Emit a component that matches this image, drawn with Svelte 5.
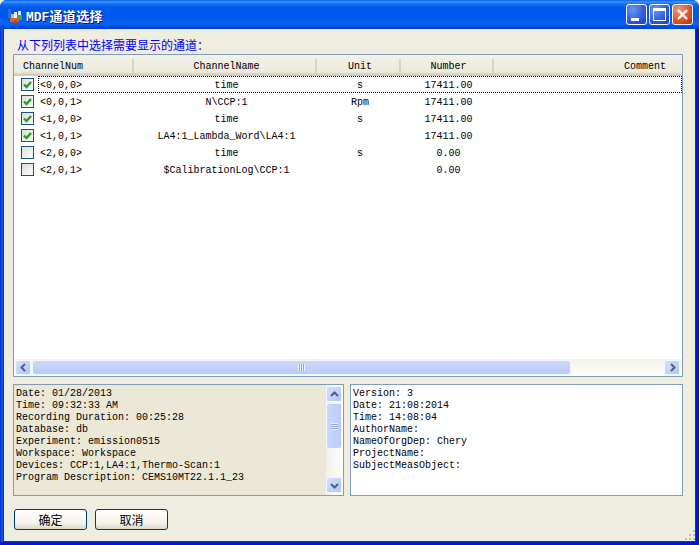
<script>
  const cols = [
    ['<0,0,0>', 'time', 's', '17411.00', true],
    ['<0,0,1>', 'N\\CCP:1', 'Rpm', '17411.00', true],
    ['<1,0,0>', 'time', 's', '17411.00', true],
    ['<1,0,1>', 'LA4:1_Lambda_Word\\LA4:1', '', '17411.00', true],
    ['<2,0,0>', 'time', 's', '0.00', false],
    ['<2,0,1>', '$CalibrationLog\\CCP:1', '', '0.00', false]
  ];
  const leftInfo = ['Date: 01/28/2013','Time: 09:32:33 AM','Recording Duration: 00:25:28','Database: db','Experiment: emission0515','Workspace: Workspace','Devices: CCP:1,LA4:1,Thermo-Scan:1','Program Description: CEMS10MT22.1.1_23'];
  const rightInfo = ['Version: 3','Date: 21:08:2014','Time: 14:08:04','AuthorName:','NameOfOrgDep: Chery','ProjectName:','SubjectMeasObject:'];
</script>

<div class="win">
  <div class="titlebar">
    <svg class="appicon" width="17" height="17" viewBox="0 0 17 17">
      <rect x="1" y="3" width="3" height="9" fill="#2f6fd8"/>
      <rect x="4" y="8" width="3" height="4" fill="#9cc0ee"/>
      <rect x="7" y="6" width="3" height="6" fill="#e6eefa"/>
      <rect x="3" y="12" width="9" height="4" fill="#d8662a"/>
      <rect x="7" y="14" width="3" height="3" fill="#c9402a"/>
      <rect x="10" y="9" width="5" height="5" fill="#4da24a"/>
      <rect x="11" y="5" width="3" height="4" fill="#dfe9f8"/>
    </svg>
    <span class="title"><b class="lat">MDF</b>通道选择</span>
    <span class="spacer"></span>
    <button class="cap blue" aria-label="minimize"><i class="min"></i></button>
    <button class="cap blue" aria-label="maximize"><i class="max"></i></button>
    <button class="cap red" aria-label="close">
      <svg width="13" height="13" viewBox="0 0 13 13"><path d="M2 2l9 9M11 2l-9 9" stroke="#fff" stroke-width="2.4"/></svg>
    </button>
  </div>
  <div class="body">
    <div class="prompt">从下列列表中选择需要显示的通道：</div>
    <div class="list">
      <div class="head row">
        <span class="c0 hc">ChannelNum</span>
        <span class="c1 hc">ChannelName</span>
        <span class="c2 hc">Unit</span>
        <span class="c3 hc">Number</span>
        <span class="c4">Comment</span>
      </div>
      <div class="rows">
        {#each cols as r, i}
          <div class="row item" class:focus={i === 0}>
            <span class="c0 first">
              <span class="cb" class:on={r[4]}>
                {#if r[4]}
                  <svg width="11" height="11" viewBox="0 0 11 11"><path d="M2 5.5l2.5 2.5L9 3" fill="none" stroke="#21a121" stroke-width="2.4"/></svg>
                {/if}
              </span>
              <span class="cell">{r[0]}</span>
            </span>
            <span class="c1 cell">{r[1]}</span>
            <span class="c2 cell">{r[2]}</span>
            <span class="c3 cell">{r[3]}</span>
            <span class="c4"></span>
          </div>
        {/each}
      </div>
      <div class="hscroll">
        <span class="sbtn"><svg width="9" height="9" viewBox="0 0 9 9"><path d="M6 1L2.5 4.5 6 8" fill="none" stroke="#4d6185" stroke-width="2"/></svg></span>
        <span class="hthumb"><span class="grip"></span></span>
        <span class="htrack"></span>
        <span class="sbtn"><svg width="9" height="9" viewBox="0 0 9 9"><path d="M3 1l3.5 3.5L3 8" fill="none" stroke="#4d6185" stroke-width="2"/></svg></span>
      </div>
    </div>
    <div class="panels">
      <div class="panel left">
        <div class="text">{#each leftInfo as l}<div>{l}</div>{/each}</div>
        <div class="vscroll">
          <span class="sbtn"><svg width="9" height="9" viewBox="0 0 9 9"><path d="M1 6l3.5-3.5L8 6" fill="none" stroke="#4d6185" stroke-width="2"/></svg></span>
          <span class="vthumb"><span class="vgrip"></span></span>
          <span class="vtrack"></span>
          <span class="sbtn"><svg width="9" height="9" viewBox="0 0 9 9"><path d="M1 3l3.5 3.5L8 3" fill="none" stroke="#4d6185" stroke-width="2"/></svg></span>
        </div>
      </div>
      <div class="panel right">
        <div class="text">{#each rightInfo as l}<div>{l}</div>{/each}</div>
      </div>
    </div>
    <div class="buttons">
      <button class="btn">确定</button>
      <button class="btn">取消</button>
    </div>
    <svg class="grip-corner" width="12" height="12" viewBox="0 0 12 12" fill="#c1bdaa">
      <rect x="10" y="1" width="2" height="2"/><rect x="6" y="5" width="2" height="2"/><rect x="10" y="5" width="2" height="2"/>
      <rect x="2" y="9" width="2" height="2"/><rect x="6" y="9" width="2" height="2"/><rect x="10" y="9" width="2" height="2"/>
    </svg>
  </div>
</div>

<style>
  :global(body) { margin: 0; background: #efece0; }
  .win {
    width: 699px; height: 545px; box-sizing: border-box;
    display: flex; flex-direction: column;
    background:
      linear-gradient(0deg, #0019cf 3px, transparent 3px),
      linear-gradient(90deg, #0831d9 0 1px, #0855dd 1px 3px, #0831d9 3px 696px, #0019cf 696px);
    border-radius: 7px 7px 0 0; overflow: hidden;
    font-family: "Liberation Mono", "Noto Sans CJK SC", monospace;
    font-size: 10px; color: #000;
  }
  .titlebar {
    height: 29px; flex: none; display: flex; align-items: center; box-sizing: border-box; padding: 0 6px 0 7px;
    background: linear-gradient(180deg, #0a5fe6 0, #3c96fb 2px, #0f6cf4 4px, #0058e8 8px, #0058ee 18px, #0a64f4 24px, #0048dd 27px, #003fc8 29px);
  }
  .appicon { flex: none; }
  .title { margin: 2px 0 0 2px; color: #fff; font: bold 13px "Noto Sans CJK SC", sans-serif; letter-spacing: 0.4px; text-shadow: 1px 1px #0f1089; }
  .lat { font: bold 13px "Liberation Mono", monospace; letter-spacing: 0; }
  .spacer { flex: 1; }
  .cap {
    width: 21px; height: 21px; margin-left: 2px; padding: 0; border: 1px solid #fff; border-radius: 3px;
    display: flex; align-items: center; justify-content: center; position: relative;
  }
  .blue { background: radial-gradient(circle at 30% 25%, #6b95f2, #2a55dc 65%, #1f3fbe); }
  .red { background: radial-gradient(circle at 30% 25%, #ea9b7c, #d84b23 65%, #b32b10); }
  .min { position: absolute; left: 4px; bottom: 3px; width: 8px; height: 3px; background: #fff; }
  .max { width: 13px; height: 13px; box-sizing: border-box; border: 1px solid #fff; border-top-width: 3px; }
  .body {
    flex: 1; min-height: 0; margin: 0 4px 4px; background: #efece0; position: relative;
    padding: 8px 9px 0; box-sizing: border-box;
    display: flex; flex-direction: column;
  }
  .prompt { height: 17px; font: 12px/16px "Noto Sans CJK SC", sans-serif; color: #0000ff; padding-left: 4px; box-sizing: border-box; }
  .list {
    width: 670px; height: 323px; box-sizing: border-box; border: 1px solid #7f9db9; background: #fff;
    display: flex; flex-direction: column;
  }
  .row { display: grid; grid-template-columns: 120px 183px 84px 93px 1fr; align-items: center; text-align: center; white-space: pre; }
  .head {
    height: 21px; flex: none; box-sizing: border-box; padding-top: 1px;
    background: linear-gradient(180deg, #f3f1e6 0, #ebeadb 17px, #d6d2c2 19px, #cbc7b8 21px);
  }
  .hc { border-right: 2px solid #d8d4c5; height: 15px; line-height: 15px; box-sizing: border-box; }
  .head .c0 { text-align: left; padding-left: 9px; }
  .head .c1, .head .c2, .head .c3 { padding-left: 4px; box-sizing: border-box; }
  .item .c1, .item .c2, .item .c3 { padding-left: 2px; box-sizing: border-box; }
  .head .c4 { text-align: right; padding-right: 16px; }
  .rows { flex: 1; }
  .item { height: 17px; line-height: 17px; position: relative; grid-template-rows: 17px; }
  .cell { padding-top: 2px; }
  .focus::before {
    content: ""; position: absolute; left: 24px; right: 0; top: 0; bottom: 0;
    border: 1px dotted #000;
  }
  .first { display: flex; align-items: center; text-align: left; padding-left: 7px; height: 17px; }
  .cb {
    width: 11px; height: 11px; border: 1px solid #1c5180; margin-right: 6px; display: flex; flex: none;
    background: linear-gradient(135deg, #dcdcd7, #fff);
  }
  .hscroll {
    height: 17px; flex: none; box-sizing: border-box; padding: 1px 2px 1px 1px; display: flex; background: linear-gradient(180deg, #f3f1ec, #fefefb);
  }
  .sbtn {
    width: 16px; height: 15px; flex: none; box-sizing: border-box; border: 1px solid #f4f6fd; border-radius: 2px;
    background: linear-gradient(135deg, #d5e1fc, #b0c5f6);
    display: flex; align-items: center; justify-content: center;
  }
  .hthumb {
    width: 539px; margin-left: 1px; box-sizing: border-box; border: 1px solid #f4f6fd; border-radius: 3px;
    background: linear-gradient(180deg, #c9d8fb, #b8cbf8); display: flex; align-items: center; justify-content: center;
  }
  .grip { width: 7px; height: 7px; background: repeating-linear-gradient(90deg, #eef4fe 0 1px, #8ca7e0 1px 2px); }
  .htrack { flex: 1; }
  .panels { display: flex; gap: 6px; margin-top: 7px; }
  .panel {
    height: 112px; box-sizing: border-box; border: 1px solid #7f9db9; display: flex; line-height: 12px;
  }
  .left { width: 331px; background: #ebe8d8; }
  .right { width: 333px; background: #fff; }
  .text { flex: 1; padding: 3px 2px; white-space: pre; min-width: 0; }
  .vscroll { width: 17px; flex: none; box-sizing: border-box; padding: 1px 1px 2px 0; display: flex; flex-direction: column; background: linear-gradient(90deg, #f3f1ec, #fefefb); }
  .vscroll .sbtn { width: 16px; height: 16px; }
  .vthumb {
    height: 46px; margin-top: 1px; box-sizing: border-box; border: 1px solid #f4f6fd; border-radius: 3px;
    background: linear-gradient(90deg, #c9d8fb, #b8cbf8); display: flex; align-items: center; justify-content: center;
  }
  .vgrip { width: 7px; height: 7px; background: repeating-linear-gradient(180deg, #eef4fe 0 1px, #8ca7e0 1px 2px); }
  .vtrack { flex: 1; }
  .buttons { display: flex; gap: 8px; margin-top: 13px; padding-left: 1px; }
  .btn {
    width: 73px; height: 21px; padding: 0; box-sizing: border-box; border: 1px solid #003c74; border-radius: 3px;
    background: linear-gradient(180deg, #fff, #f3f2ea 70%, #dcd8c8);
    font: 12px "Noto Sans CJK SC", sans-serif; color: #000;
  }
  .grip-corner { position: absolute; right: 0; bottom: 0; }
</style>
